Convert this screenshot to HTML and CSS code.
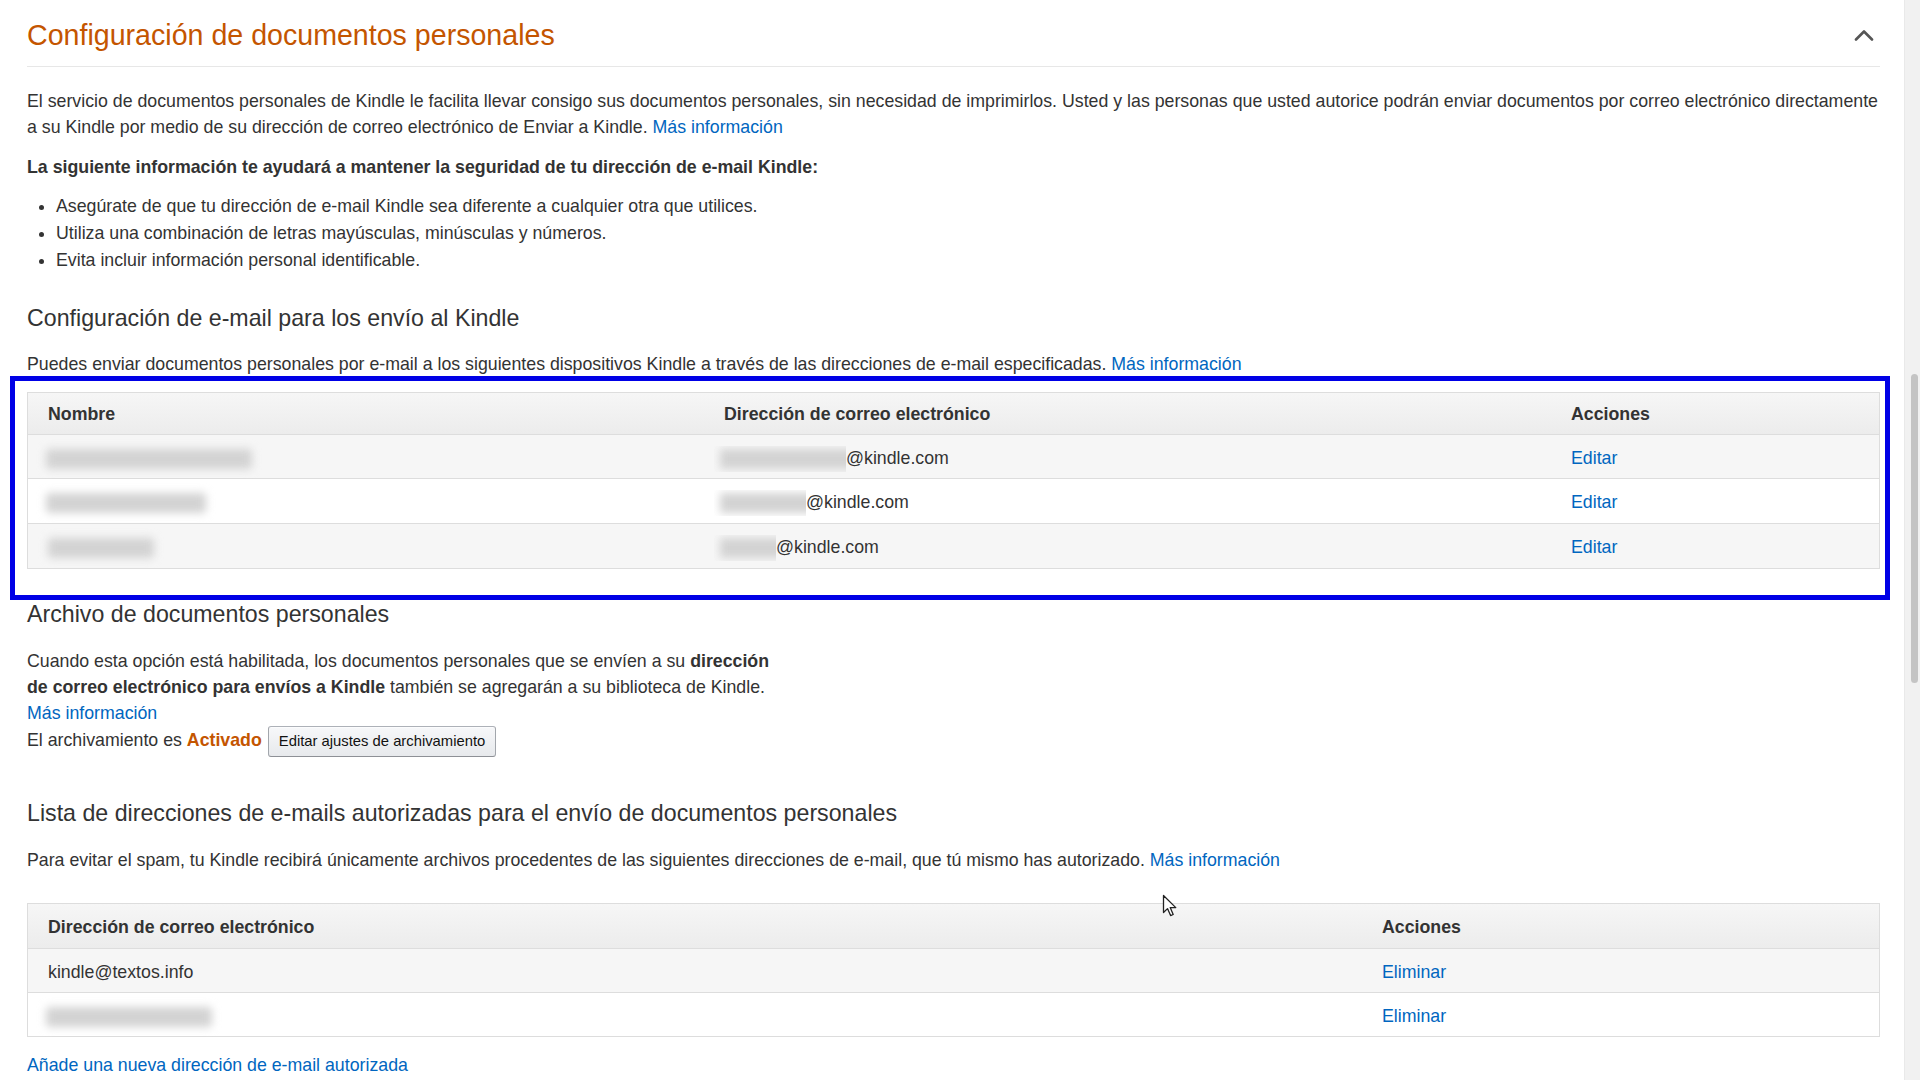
FILE: index.html
```html
<!DOCTYPE html>
<html lang="es">
<head>
<meta charset="utf-8">
<title>Configuración de documentos personales</title>
<link rel="stylesheet" href="styles.css">
</head>
<body>
<div class="page">
  <main class="content">
    <div class="section-head">
      <h1 class="title">Configuración de documentos personales</h1>
      <svg class="chevron" width="20" height="12" viewBox="0 0 20 12" aria-hidden="true"><polyline points="2,10.5 10,2.5 18,10.5" fill="none" stroke="#555" stroke-width="2.6" stroke-linecap="round" stroke-linejoin="round"/></svg>
    </div>

    <p class="intro">El servicio de documentos personales de Kindle le facilita llevar consigo sus documentos personales, sin necesidad de imprimirlos. Usted y las personas que usted autorice podrán enviar documentos por correo electrónico directamente a su Kindle por medio de su dirección de correo electrónico de Enviar a Kindle. <a class="link" href="#">Más información</a></p>

    <p class="note">La siguiente información te ayudará a mantener la seguridad de tu dirección de e-mail Kindle:</p>

    <ul class="tips">
      <li>Asegúrate de que tu dirección de e-mail Kindle sea diferente a cualquier otra que utilices.</li>
      <li>Utiliza una combinación de letras mayúsculas, minúsculas y números.</li>
      <li>Evita incluir información personal identificable.</li>
    </ul>

    <h2 class="sub sub-email">Configuración de e-mail para los envío al Kindle</h2>
    <p class="desc desc-email">Puedes enviar documentos personales por e-mail a los siguientes dispositivos Kindle a través de las direcciones de e-mail especificadas. <a class="link" href="#">Más información</a></p>

    <div class="table devices">
      <div class="row head">
        <div class="cell">Nombre</div>
        <div class="cell">Dirección de correo electrónico</div>
        <div class="cell">Acciones</div>
      </div>
      <div class="row odd">
        <div class="cell"><span class="blur name-1"></span></div>
        <div class="cell"><span class="mask mail-1"><i></i></span>@kindle.com</div>
        <div class="cell"><a class="link" href="#">Editar</a></div>
      </div>
      <div class="row even">
        <div class="cell"><span class="blur name-2"></span></div>
        <div class="cell"><span class="mask mail-2"><i></i></span>@kindle.com</div>
        <div class="cell"><a class="link" href="#">Editar</a></div>
      </div>
      <div class="row odd">
        <div class="cell"><span class="blur name-3"></span></div>
        <div class="cell"><span class="mask mail-3"><i></i></span>@kindle.com</div>
        <div class="cell"><a class="link" href="#">Editar</a></div>
      </div>
    </div>

    <h2 class="sub sub-archive">Archivo de documentos personales</h2>
    <div class="archive">
      <p class="archive-text">Cuando esta opción está habilitada, los documentos personales que se envíen a su <b>dirección de correo electrónico para envíos a Kindle</b> también se agregarán a su biblioteca de Kindle.</p>
      <a class="link archive-more" href="#">Más información</a>
      <div class="archive-status"><span>El archivamiento es&nbsp;</span><span class="on">Activado</span><button class="btn" type="button">Editar ajustes de archivamiento</button></div>
    </div>

    <h2 class="sub sub-list">Lista de direcciones de e-mails autorizadas para el envío de documentos personales</h2>
    <p class="desc desc-list">Para evitar el spam, tu Kindle recibirá únicamente archivos procedentes de las siguientes direcciones de e-mail, que tú mismo has autorizado. <a class="link" href="#">Más información</a></p>

    <div class="table senders">
      <div class="row head">
        <div class="cell">Dirección de correo electrónico</div>
        <div class="cell">Acciones</div>
      </div>
      <div class="row odd">
        <div class="cell">kindle@textos.info</div>
        <div class="cell"><a class="link" href="#">Eliminar</a></div>
      </div>
      <div class="row even">
        <div class="cell"><span class="blur name-4"></span></div>
        <div class="cell"><a class="link" href="#">Eliminar</a></div>
      </div>
    </div>

    <a class="link add-link" href="#">Añade una nueva dirección de e-mail autorizada</a>
  </main>

  <div class="scrollbar"><div class="thumb"></div></div>

  <div class="highlight"></div>

  <svg class="cursor" width="16" height="24" viewBox="0 0 16 24" aria-hidden="true"><path d="M1.5 1.5 L1.5 18.5 L5.5 14.6 L8.6 21.6 L11.2 20.5 L8.2 13.6 L13.8 13.6 Z" fill="#fff" stroke="#222" stroke-width="1.3" stroke-linejoin="round"/></svg>
</div>
</body>
</html>
```

FILE: styles.css
```css
html, body {
  margin: 0;
  padding: 0;
}

body {
  font-family: "Liberation Sans", Arial, sans-serif;
  font-size: 17.75px;
  line-height: 25.8px;
  color: #333;
  background: #fff;
}

.page {
  position: relative;
  display: flex;
  height: 1080px;
  overflow: hidden;
}

.content {
  flex: 1;
  min-width: 0;
  padding: 0 24px 0 27px;
}

/* header */
.section-head {
  display: flex;
  justify-content: space-between;
  align-items: center;
  height: 67px;
  box-sizing: border-box;
  padding-top: 4px;
  border-bottom: 1px solid #e7e7e7;
}

.title {
  margin: 0;
  font-size: 28.6px;
  line-height: 36px;
  font-weight: 400;
  color: #c45500;
}

.chevron {
  margin-right: 6px;
}

p {
  margin: 0;
}

.link {
  color: #0066c0;
  text-decoration: none;
}

.intro {
  margin-top: 22px;
}

.note {
  margin-top: 14px;
  font-weight: 700;
}

.tips {
  margin: 14px 0 0;
  padding-left: 29px;
}

.tips li {
  margin-bottom: 1.1px;
}

.sub {
  margin: 0;
  font-size: 23.2px;
  line-height: 30px;
  font-weight: 400;
  color: #333;
}

.sub-email { margin-top: 29.5px; }
.desc-email { margin-top: 19px; }

/* tables */
.table {
  border: 1px solid #ddd;
}

.row {
  display: grid;
  align-items: center;
  height: 43.5px;
}

.row + .row {
  border-top: 1px solid #ddd;
}

.row.head {
  height: 41px;
  font-weight: 700;
  background: linear-gradient(#f6f6f6, #ececec);
}

.row.odd { background: #f6f6f6; }
.row.even { background: #fff; }

.cell {
  padding: 4px 20px 0;
  white-space: nowrap;
  display: flex;
  align-items: center;
}

.devices {
  margin-top: 13.5px;
}

.devices .row {
  grid-template-columns: 676px 847px 1fr;
}

.devices .row.odd:last-child {
  height: 44.5px;
}

.senders {
  margin-top: 29px;
}

.senders .row {
  grid-template-columns: 1334px 1fr;
  height: 43px;
}

.senders .row.head {
  height: 44px;
}

/* redacted values */
.blur {
  display: inline-block;
  height: 20px;
  background: #d3d3d3;
  border-radius: 4px;
  filter: blur(4px);
}

.name-1 { width: 206px; margin-left: -2px; }
.name-2 { width: 160px; margin-left: -2px; }
.name-3 { width: 106px; margin-left: 0; }
.name-4 { width: 166px; margin-left: -2px; }

.mask {
  display: inline-flex;
  align-items: center;
  height: 26px;
  overflow: hidden;
  margin-left: -10px;
}

.mask i {
  display: block;
  flex: none;
  width: 100%;
  height: 20px;
  margin-left: 6px;
  margin-right: -20px;
  background: #d3d3d3;
  filter: blur(4px);
  box-sizing: content-box;
  padding-right: 14px;
}

.mail-1 { width: 132px; }
.mail-2 { width: 92px; }
.mail-3 { width: 62px; }

/* archive */
.sub-archive { margin-top: 30px; }

.archive {
  margin-top: 20px;
  width: 752px;
}

.archive-more {
  display: block;
}

.archive-status {
  display: flex;
  align-items: center;
  height: 31px;
  margin-top: -1px;
}

.on {
  color: #c45500;
  font-weight: 700;
}

.btn {
  height: 31px;
  margin-left: 6px;
  padding: 0 10px;
  box-sizing: border-box;
  font-family: "Liberation Sans", Arial, sans-serif;
  font-size: 14.8px;
  color: #111;
  border: 1px solid;
  border-color: #adb1b8 #a2a6ac #8d9096;
  border-radius: 3px;
  background: linear-gradient(#f7f8fa, #e7e9ec);
  box-shadow: 0 1px 0 rgba(255, 255, 255, 0.6) inset;
}

.sub-list { margin-top: 41.3px; }
.desc-list { margin-top: 20.5px; }

.add-link {
  display: block;
  margin-top: 16px;
}

/* scrollbar */
.scrollbar {
  flex: none;
  width: 16px;
  box-sizing: border-box;
  background: #f1f1f1;
  border-left: 1px solid #e9e9e9;
  padding-top: 374px;
}

.thumb {
  width: 7px;
  height: 309px;
  margin-left: 6px;
  border-radius: 4px;
  background: #c4c4c4;
}

/* overlays */
.highlight {
  position: absolute;
  left: 10px;
  top: 376px;
  width: 1880px;
  height: 224px;
  box-sizing: border-box;
  border: 5px solid #0000e6;
  pointer-events: none;
}

.cursor {
  position: absolute;
  left: 1162px;
  top: 894px;
}
```
